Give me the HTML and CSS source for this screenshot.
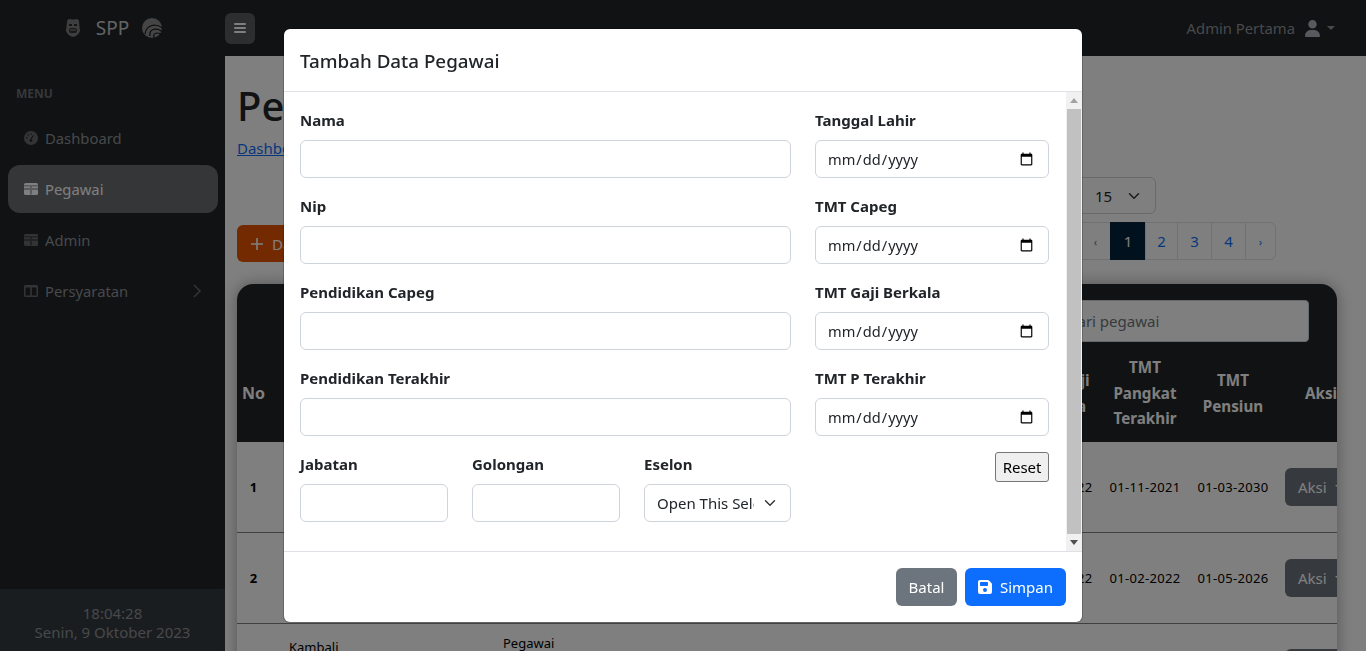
FILE: index.html
```html
<!DOCTYPE html>
<html lang="en">
<head>
    <meta charset="UTF-8">
    <meta name="viewport" content="width=device-width, initial-scale=1.0">
    <title>Pegawai - SPP</title>
    <link rel="stylesheet" href="styles.css">
</head>
<body>
    <nav class="topbar">
        <div class="brand">
            <svg class="logo-shield" viewBox="0 0 16 20" width="16" height="20">
                <path d="M2 4 Q2 1 5 1 Q8 2 11 1 Q14 1 14 4 L15 13 Q13 18 8 19 Q3 18 1 13 Z" fill="#7d7d7d"/>
                <path d="M4 6h3v2H4zM9 6h3v2H9z" fill="#2a2a2a"/>
                <rect x="4" y="10" width="8" height="5" rx="2" fill="#333"/>
                <path d="M5 12h6" stroke="#8a8a8a" stroke-width="1"/>
            </svg>
            <span class="brand-name">SPP</span>
            <svg class="logo-swirl" viewBox="0 0 20 20" width="20" height="20">
                <circle cx="10" cy="10" r="10" fill="#8a8a8a"/>
                <path d="M3 16 Q4 8 12 7 Q17 7 20 10" fill="none" stroke="#111316" stroke-width="1.200"/>
                <path d="M8 18 Q7 12 13 11 Q17 11 20 13.500" fill="none" stroke="#111316" stroke-width="1.200"/>
                <path d="M12 20 Q11 15 15 15 Q18 15 19 16.500" fill="none" stroke="#111316" stroke-width="1.200"/>
            </svg>
        </div>
        <button class="menu-toggle" type="button">
            <svg viewBox="0 0 12 10" width="12" height="10"><path d="M1 1h10M1 5h10M1 9h10" stroke="#fff" stroke-width="2" stroke-linecap="round"/></svg>
        </button>
        <div class="user">
            <span>Admin Pertama</span>
            <svg viewBox="0 0 448 512" width="15" height="17"><path fill="#adb5bd" d="M224 256a128 128 0 1 0 0-256 128 128 0 1 0 0 256zm-45.700 48C79.800 304 0 383.800 0 482.300 0 498.700 13.300 512 29.700 512h388.600c16.400 0 29.700-13.300 29.700-29.700C448 383.800 368.200 304 269.700 304h-91.400z"/></svg>
            <span class="caret"></span>
        </div>
    </nav>

    <div class="layout">
        <aside class="sidebar">
            <div class="menu">
                <div class="menu-title">MENU</div>
                <a class="menu-item"><svg class="menu-icon" viewBox="0 0 16 16" width="16" height="16"><path fill="currentColor" d="M8 1a7 7 0 1 0 0 14A7 7 0 0 0 8 1zm0 2.200a.8.800 0 1 1 0 1.600.8.800 0 0 1 0-1.600zM3.800 8.800a.8.800 0 1 1 0-1.600.8.800 0 0 1 0 1.600zm1.200-3a.8.800 0 1 1 0-1.600.8.800 0 0 1 0 1.600zM9.300 10.500a1.400 1.400 0 1 1-1.900-1.300l2.600-4.200.8.500-2.300 4.100c.5.200.8.500.8.900z"/></svg>Dashboard</a>
                <a class="menu-item active"><svg class="menu-icon" viewBox="0 0 16 16" width="16" height="16"><path fill="currentColor" fill-rule="evenodd" d="M2.500 2h11A1.500 1.500 0 0 1 15 3.500v9a1.500 1.500 0 0 1-1.500 1.500h-11A1.500 1.500 0 0 1 1 12.500v-9A1.500 1.500 0 0 1 2.500 2zM1 7.500v1h14v-1zM7.500 5v8.500h1V5zM1 4.500v.8h14v-.8z"/></svg>Pegawai</a>
                <a class="menu-item"><svg class="menu-icon" viewBox="0 0 16 16" width="16" height="16"><path fill="currentColor" fill-rule="evenodd" d="M2.500 2h11A1.500 1.500 0 0 1 15 3.500v9a1.500 1.500 0 0 1-1.500 1.500h-11A1.500 1.500 0 0 1 1 12.500v-9A1.500 1.500 0 0 1 2.500 2zM1 7.500v1h14v-1zM7.500 5v8.500h1V5zM1 4.500v.8h14v-.8z"/></svg>Admin</a>
                <a class="menu-item"><svg class="menu-icon" viewBox="0 0 16 16" width="16" height="16"><path fill="currentColor" fill-rule="evenodd" d="M2.500 2h11A1.500 1.500 0 0 1 15 3.500v9a1.500 1.500 0 0 1-1.500 1.500h-11A1.500 1.500 0 0 1 1 12.500v-9A1.500 1.500 0 0 1 2.500 2zM2.500 4.500v8h4.700v-8zm6.300 0v8h4.700v-8z"/></svg>Persyaratan
                    <svg class="menu-arrow" viewBox="0 0 10 16" width="10" height="16"><path d="M2 2l6 6-6 6" fill="none" stroke="currentColor" stroke-width="1.500"/></svg>
                </a>
            </div>
            <div class="sidebar-footer">
                <div>18:04:28</div>
                <div>Senin, 9 Oktober 2023</div>
            </div>
        </aside>

        <main class="content">
            <h1 class="page-title">Pegawai</h1>
            <a class="crumb" href="#">Dashboard</a>

            <div class="tools">
                <button class="btn-add" type="button">
                    <svg viewBox="0 0 12 12" width="12" height="12"><path d="M6 0v12M0 6h12" stroke="#fff" stroke-width="1.600"/></svg>
                    Data Pegawai
                </button>
                <div class="tools-right">
                    <div class="per-page">15<svg viewBox="0 0 16 16" width="12" height="12"><path d="M2 5l6 6 6-6" fill="none" stroke="#343a40" stroke-width="2" stroke-linecap="round" stroke-linejoin="round"/></svg></div>
                    <ul class="pager">
                        <li class="page-prev">‹</li>
                        <li class="current">1</li>
                        <li class="page-two">2</li>
                        <li>3</li>
                        <li>4</li>
                        <li class="page-next">›</li>
                    </ul>
                </div>
            </div>

            <div class="table-card">
                <div class="search-row"><input class="search" type="text" placeholder="Cari pegawai"></div>
                <table class="data-table">
                    <colgroup>
                        <col class="c-no"><col class="c-name"><col class="c-job"><col class="c-rest"><col class="c-date"><col class="c-date"><col class="c-date"><col class="c-date">
                    </colgroup>
                    <thead>
                        <tr><th class="th-no">No</th><th>Nama</th><th>Jabatan</th><th></th><th>TMT Gaji Berkala</th><th>TMT Pangkat Terakhir</th><th>TMT Pensiun</th><th>Aksi</th></tr>
                    </thead>
                    <tbody>
                        <tr class="first"><td class="num">1</td><td></td><td></td><td></td><td class="date">01-01-2022</td><td class="date">01-11-2021</td><td class="date">01-03-2030</td><td class="aksi"><span class="btn-aksi">Aksi <span class="caret"></span></span></td></tr>
                        <tr><td class="num">2</td><td></td><td></td><td></td><td class="date">01-01-2022</td><td class="date">01-02-2022</td><td class="date">01-05-2026</td><td class="aksi"><span class="btn-aksi">Aksi <span class="caret"></span></span></td></tr>
                        <tr class="top"><td></td><td class="name-3">Kambali</td><td class="job-3">Pegawai</td><td></td><td></td><td></td><td></td><td class="aksi aksi-3"><span class="btn-aksi">Aksi <span class="caret"></span></span></td></tr>
                    </tbody>
                </table>
            </div>
        </main>
    </div>

    <div class="backdrop"></div>
    <div class="modal-wrap">
        <div class="modal">
            <div class="modal-header">Tambah Data Pegawai</div>
            <div class="modal-middle">
                <form class="modal-body">
                    <div class="col-left">
                        <div class="field"><label>Nama</label><input type="text"></div>
                        <div class="field"><label>Nip</label><input type="text"></div>
                        <div class="field"><label>Pendidikan Capeg</label><input type="text"></div>
                        <div class="field"><label>Pendidikan Terakhir</label><input type="text"></div>
                        <div class="three">
                            <div class="field"><label>Jabatan</label><input type="text"></div>
                            <div class="field"><label>Golongan</label><input type="text"></div>
                            <div class="field"><label>Eselon</label><select><option>Open This Select</option></select></div>
                        </div>
                    </div>
                    <div class="col-right">
                        <div class="field"><label>Tanggal Lahir</label><input type="date"></div>
                        <div class="field"><label>TMT Capeg</label><input type="date"></div>
                        <div class="field"><label>TMT Gaji Berkala</label><input type="date"></div>
                        <div class="field"><label>TMT P Terakhir</label><input type="date"></div>
                        <button class="btn-reset" type="reset">Reset</button>
                    </div>
                </form>
                <div class="scrollbar">
                    <span class="arrow-up"></span>
                    <span class="thumb"></span>
                    <span class="arrow-down"></span>
                </div>
            </div>
            <div class="modal-footer">
                <button class="btn btn-grey" type="button">Batal</button>
                <button class="btn btn-blue" type="button">
                    <svg viewBox="0 0 448 512" width="14" height="16"><path fill="#fff" d="M64 32C28.700 32 0 60.700 0 96v320c0 35.300 28.700 64 64 64h320c35.300 0 64-28.700 64-64V173.300c0-17-6.700-33.300-18.700-45.300L352 50.700C340 38.700 323.700 32 306.700 32H64zm0 96c0-17.700 14.300-32 32-32h192c17.700 0 32 14.300 32 32v64c0 17.700-14.300 32-32 32H96c-17.700 0-32-14.300-32-32v-64zm160 160a64 64 0 1 1 0 128 64 64 0 1 1 0-128z"/></svg>
                    Simpan
                </button>
            </div>
        </div>
    </div>
</body>
</html>
```

FILE: styles.css
```css
* {
    box-sizing: border-box;
}
html, body {
    height: 100%;
}
body {
    margin: 0;
    overflow: hidden;
    font-family: "Noto Sans", "Open Sans", sans-serif;
    font-size: 15px;
    color: #212529;
    background-color: #fff;
}

/* top bar */
.topbar {
    display: flex;
    align-items: center;
    height: 56px;
    background-color: #212529;
}
.brand {
    display: flex;
    align-items: center;
    justify-content: center;
    width: 225px;
    padding-left: 2px;
    color: rgba(255, 255, 255, .75);
}
.brand-name {
    margin: 0 13px 0 15px;
    font-size: 19px;
}
.menu-toggle {
    display: flex;
    align-items: center;
    justify-content: center;
    width: 30px;
    height: 31px;
    border: none;
    border-radius: 6px;
    background-color: #5a5d60;
}
.user {
    display: flex;
    align-items: center;
    gap: 10px;
    margin-left: auto;
    margin-right: 31px;
    font-size: 14.800px;
    color: #8f9398;
}
.caret {
    display: inline-block;
    width: 0;
    height: 0;
    border-top: 4.500px solid currentColor;
    border-left: 4.500px solid transparent;
    border-right: 4.500px solid transparent;
    vertical-align: middle;
}
.user .caret {
    margin-left: -3px;
}

.layout {
    display: flex;
    height: calc(100% - 56px);
}

/* sidebar */
.sidebar {
    display: flex;
    flex-direction: column;
    justify-content: space-between;
    width: 225px;
    flex-shrink: 0;
    background-color: #212529;
}
.menu {
    padding: 29px 7px 0 8px;
}
.menu-title {
    padding-left: 8px;
    margin-bottom: 12px;
    font-size: 12px;
    font-weight: 700;
    color: #6c7075;
}
.menu-item {
    display: flex;
    align-items: center;
    gap: 6px;
    height: 48px;
    margin-bottom: 3px;
    padding: 0 16px 0 15px;
    border-radius: 12px;
    font-size: 14.800px;
    color: #8f9296;
}
.menu-icon,
.menu-arrow {
    color: #65686c;
}
.menu-item.active {
    background-color: #6a6d70;
    color: #fff;
}
.menu-item.active .menu-icon {
    color: #fff;
}
.menu-arrow {
    margin-left: auto;
}
.sidebar-footer {
    height: 62px;
    padding-top: 15px;
    background-color: #343a40;
    color: #8f9296;
    text-align: center;
    line-height: 19px;
}

/* page content */
.content {
    flex: 1;
    min-width: 0;
    padding: 26px 29px 0 12px;
}
.page-title {
    margin: 0;
    font-size: 40px;
    font-weight: 500;
    line-height: 48px;
}
.crumb {
    display: block;
    height: 24px;
    margin-top: 8px;
    color: #0d6efd;
}
.tools {
    display: flex;
    justify-content: space-between;
    align-items: flex-start;
    height: 122px;
    padding-top: 15px;
    padding-right: 61px;
}
.btn-add {
    display: flex;
    align-items: center;
    gap: 9px;
    height: 37px;
    margin-top: 48px;
    padding: 0 16px 0 14px;
    border: none;
    border-radius: 6px;
    background-color: #e85500;
    color: #fff;
    font: inherit;
}
.tools-right {
    display: flex;
    flex-direction: column;
    align-items: flex-end;
    gap: 8px;
}
.per-page {
    display: flex;
    align-items: center;
    justify-content: space-between;
    width: 90px;
    height: 37px;
    margin-right: 120px;
    padding: 0 15px 0 28px;
    border: 1px solid #ced4da;
    border-radius: 6px;
}
.pager {
    display: flex;
    height: 38px;
    margin: 0;
    padding: 0;
    list-style: none;
}
.pager li {
    display: flex;
    align-items: center;
    justify-content: center;
    width: 35px;
    margin-left: -1px;
    border: 1px solid #dee2e6;
    color: #0d6efd;
}
.pager li.page-two {
    width: 33px;
}
.pager li.page-prev {
    width: 31px;
    font-size: 11px;
    color: #6c757d;
}
.pager li.page-next {
    width: 31px;
    font-size: 11px;
    border-radius: 0 6px 6px 0;
}
.pager li.current {
    width: 36px;
    background-color: #03233a;
    border-color: #03233a;
    color: #fff;
}

/* table */
.table-card {
    width: 1100px;
    height: 420px;
    border-radius: 16px;
    overflow: hidden;
    box-shadow: 0 0 16px rgba(0, 0, 0, .35);
}
.search-row {
    display: flex;
    justify-content: flex-end;
    height: 68px;
    padding: 16px 28px 0 0;
    background-color: #212529;
}
.search {
    width: 254px;
    height: 42px;
    padding: 0 12px;
    border: 1px solid #ced4da;
    border-radius: 4px;
    font: inherit;
    background-color: #fff;
}
.search::placeholder {
    color: #6c757d;
}
.data-table {
    width: 1128px;
    table-layout: fixed;
    border-collapse: collapse;
    font-size: 13px;
}
.c-no { width: 33px; }
.c-name { width: 225px; }
.c-job { width: 300px; }
.c-rest { width: 218px; }
.c-date { width: 88px; }
.data-table th {
    height: 90px;
    padding: 0 8px 7px;
    background-color: #212529;
    color: #fff;
    font-size: 15.200px;
    font-weight: 700;
    line-height: 25.500px;
    text-align: center;
}
.data-table th.th-no {
    padding: 0 0 7px 0;
    font-size: 16px;
}
.data-table td {
    height: 91px;
    padding: 0 8px;
    border-bottom: 1px solid #808080;
    text-align: center;
    vertical-align: middle;
    color: #000;
}
.data-table .first td {
    height: 90px;
}
.data-table td.num {
    padding: 0;
    font-weight: 700;
}
.data-table td.date {
    padding: 0;
    letter-spacing: .3px;
}
.data-table td.aksi {
    padding-left: 8px;
    text-align: left;
}
.data-table .top td {
    text-align: left;
    vertical-align: top;
}
.data-table td.name-3 {
    padding: 14px 0 0 19px;
}
.data-table td.job-3 {
    padding-top: 10px;
}
.data-table td.aksi-3 {
    padding-top: 25px;
}
.btn-aksi {
    display: inline-flex;
    align-items: center;
    gap: 8px;
    width: 70px;
    height: 38px;
    padding-left: 13px;
    border-radius: 6px;
    background-color: #6c757d;
    color: #fff;
    font-size: 15px;
}

/* modal */
.backdrop {
    position: fixed;
    inset: 0;
    background-color: #000;
    opacity: .5;
}
.modal-wrap {
    position: fixed;
    inset: 0;
    display: flex;
    justify-content: center;
    padding: 29px 0 0 0;
}
.modal {
    width: 798px;
    height: 593px;
    background-color: #fff;
    border-radius: 6px;
    overflow: hidden;
    box-shadow: 0 0 0 1px rgba(0, 0, 0, .2);
}
.modal-header {
    height: 63px;
    padding: 17px 16px 0;
    border-bottom: 1px solid #dee2e6;
    font-size: 18.800px;
    font-weight: 500;
    line-height: 30px;
}
.modal-middle {
    display: flex;
    height: 459px;
}
.modal-body {
    flex: 1;
    display: grid;
    grid-template-columns: 491px 234px;
    column-gap: 24px;
    align-content: start;
    padding: 16px;
}
.field {
    margin-bottom: 16px;
}
.field label {
    display: block;
    height: 24px;
    margin-bottom: 8px;
    font-size: 15px;
    font-weight: 700;
    line-height: 24px;
}
.field input,
.field select {
    display: block;
    width: 100%;
    height: 38px;
    padding: 0 12px;
    border: 1px solid #ced4da;
    border-radius: 6px;
    background-color: #fff;
    color: #212529;
    font: inherit;
}
.field input[type="date"] {
    padding-left: 11px;
    font-size: 14.600px;
}
.field select {
    appearance: none;
    padding-right: 36px;
    background-image: url("data:image/svg+xml,%3csvg xmlns='http://www.w3.org/2000/svg' viewBox='0 0 16 16'%3e%3cpath fill='none' stroke='%23343a40' stroke-linecap='round' stroke-linejoin='round' stroke-width='2' d='M2 5l6 6 6-6'/%3e%3c/svg%3e");
    background-repeat: no-repeat;
    background-position: right 12px center;
    background-size: 16px 12px;
}
.three {
    display: grid;
    grid-template-columns: 148px 148px 147px;
    column-gap: 24px;
}
.col-right {
    display: flex;
    flex-direction: column;
}
.btn-reset {
    align-self: flex-end;
    height: 30px;
    padding: 0 6.500px;
    border: 1px solid #767676;
    border-radius: 3px;
    background-color: #efefef;
    color: #000;
    font: inherit;
}
.scrollbar {
    display: flex;
    flex-direction: column;
    align-items: center;
    width: 16px;
    background-color: #f1f1f1;
}
.arrow-up,
.arrow-down {
    display: block;
    width: 0;
    height: 0;
    margin: 6px 0;
    border-left: 4px solid transparent;
    border-right: 4px solid transparent;
}
.arrow-up {
    border-bottom: 5px solid #a3a3a3;
}
.arrow-down {
    border-top: 5px solid #505050;
}
.thumb {
    flex: 1;
    width: 14px;
    background-color: #c1c1c1;
}
.modal-footer {
    display: flex;
    justify-content: flex-end;
    gap: 8px;
    height: 71px;
    padding: 16px;
    border-top: 1px solid #dee2e6;
}
.btn {
    display: flex;
    align-items: center;
    gap: 8px;
    height: 38px;
    padding: 0 13px;
    border: none;
    border-radius: 6px;
    color: #fff;
    font: inherit;
}
.btn-grey {
    padding: 0 12.500px;
    background-color: #6c757d;
}
.btn-blue {
    background-color: #0d6efd;
}
```
